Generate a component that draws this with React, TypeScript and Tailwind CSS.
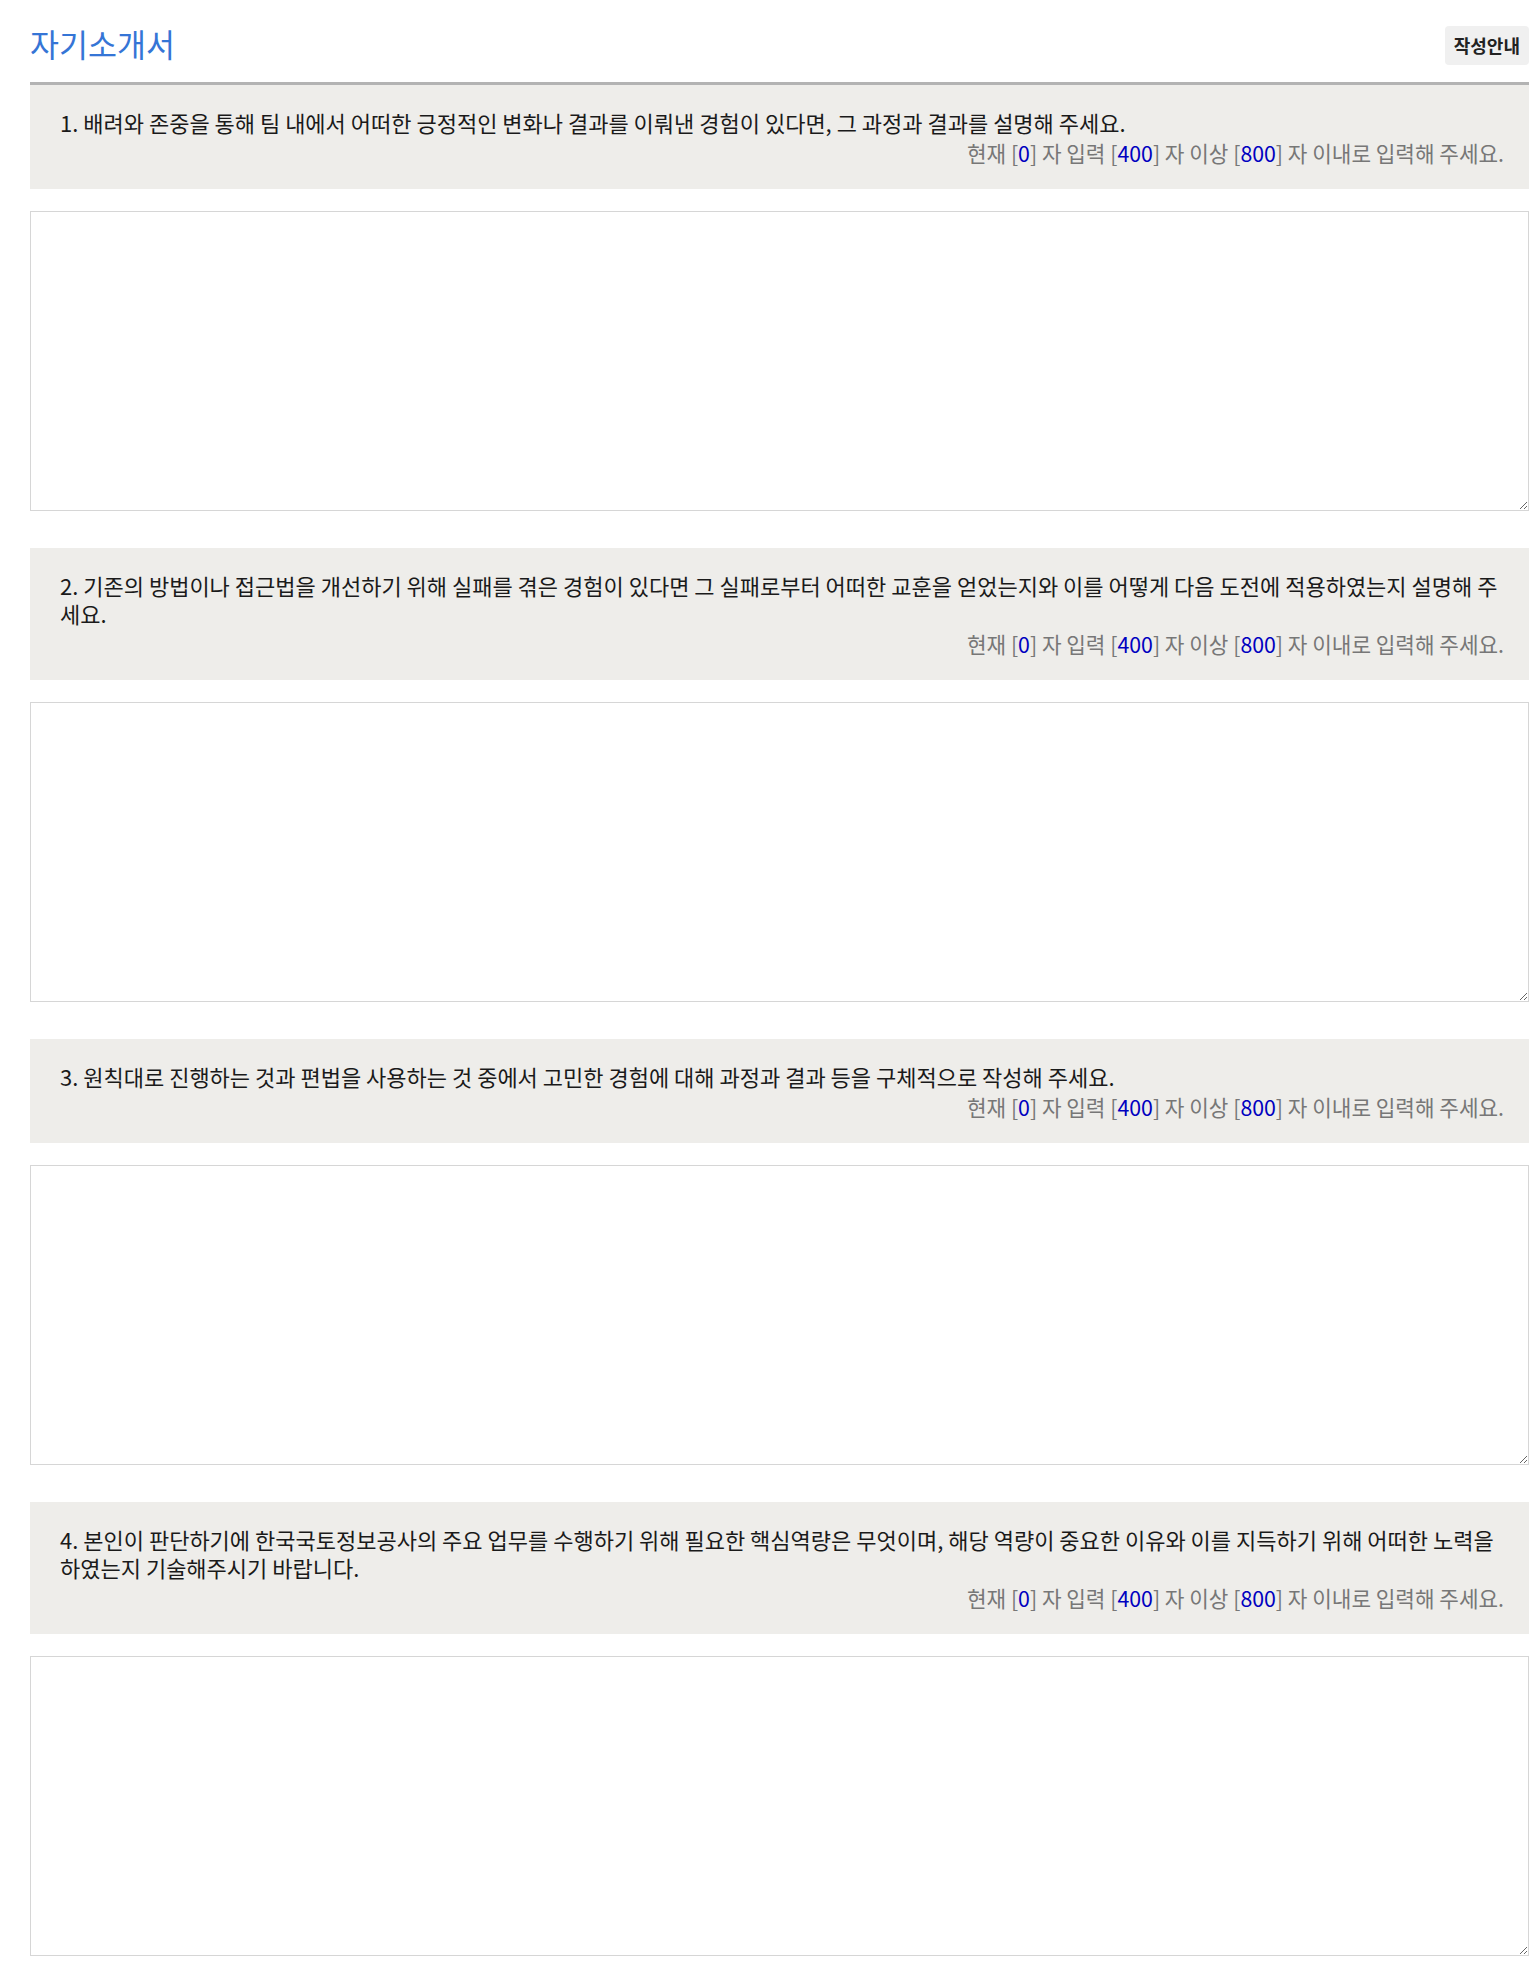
import { useState } from "react";

const questions = [
  "1. 배려와 존중을 통해 팀 내에서 어떠한 긍정적인 변화나 결과를 이뤄낸 경험이 있다면, 그 과정과 결과를 설명해 주세요.",
  "2. 기존의 방법이나 접근법을 개선하기 위해 실패를 겪은 경험이 있다면 그 실패로부터 어떠한 교훈을 얻었는지와 이를 어떻게 다음 도전에 적용하였는지 설명해 주세요.",
  "3. 원칙대로 진행하는 것과 편법을 사용하는 것 중에서 고민한 경험에 대해 과정과 결과 등을 구체적으로 작성해 주세요.",
  "4. 본인이 판단하기에 한국국토정보공사의 주요 업무를 수행하기 위해 필요한 핵심역량은 무엇이며, 해당 역량이 중요한 이유와 이를 지득하기 위해 어떠한 노력을 하였는지 기술해주시기 바랍니다.",
];

function Question({
  text,
  first,
}: {
  text: string;
  first: boolean;
}) {
  const [value, setValue] = useState("");

  return (
    <div className={first ? "" : "mt-[37px]"}>
      <div className="bg-[#eeedea] pl-[30px] pr-[21px] pt-[23px] pb-[22px]">
        <p className="text-[22px] leading-[28px] text-[#1a1a1a]">{text}</p>
        <p className="mt-[3px] pr-[4px] text-right text-[21.3px] leading-[28px] text-[#777]">
          현재 [<span className="text-[#0000c0]">{value.length}</span>] 자 입력 [
          <span className="text-[#0000c0]">400</span>] 자 이상 [
          <span className="text-[#0000c0]">800</span>] 자 이내로 입력해 주세요.
        </p>
      </div>
      <textarea
        value={value}
        onChange={(e) => setValue(e.target.value)}
        className="mt-[22px] block h-[300px] w-full border border-[#d6d6d6] bg-white p-2 text-[16px] outline-none"
      />
    </div>
  );
}

function App() {
  return (
    <div
      className="ml-[30px] w-[1499px] pb-[10px]"
      style={{ fontFamily: '"Noto Sans CJK KR", "Noto Sans", sans-serif' }}
    >
      <div className="flex h-[82px] items-center justify-between pt-[6px]">
        <h1 className="text-[31.5px] font-normal text-[#3575d6]">자기소개서</h1>
        <button className="mt-[2px] rounded-[4px] bg-[#f0f0f0] px-[9px] py-[6px] text-[18px] font-bold text-[#222]">
          작성안내
        </button>
      </div>
      <div className="border-t-[3px] border-[#b3b3b3]">
        {questions.map((q, i) => (
          <Question key={i} text={q} first={i === 0} />
        ))}
      </div>
    </div>
  );
}

export default App;
